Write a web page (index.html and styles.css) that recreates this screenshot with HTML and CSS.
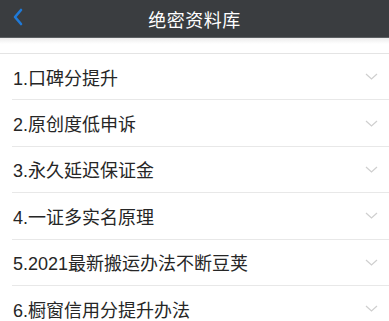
FILE: index.html
```html
<!DOCTYPE html>
<html lang="zh-CN">

<head>
    <meta charset="UTF-8">
    <meta name="viewport" content="width=device-width, initial-scale=1.0">
    <title>绝密资料库</title>
    <link rel="stylesheet" href="styles.css">
</head>

<body>
    <div class="top-bar">
        <a class="back-button" href="#">
            <svg width="14" height="20" viewBox="0 0 14 20">
                <path d="M10 3 L4 10 L10 17" fill="none" stroke="#1f7ad8" stroke-width="2.6" stroke-linecap="round" stroke-linejoin="round" />
            </svg>
        </a>
        <h1 class="top-title">绝密资料库</h1>
    </div>

    <div class="top-gap"></div>

    <!-- Topic list -->
    <ul class="topic-list">
        <li class="topic-item"><span>1.口碑分提升</span><svg class="arrow" viewBox="0 0 13 7"><path d="M1 1 L6.5 6 L12 1" /></svg></li>
        <li class="topic-item"><span>2.原创度低申诉</span><svg class="arrow" viewBox="0 0 13 7"><path d="M1 1 L6.5 6 L12 1" /></svg></li>
        <li class="topic-item"><span>3.永久延迟保证金</span><svg class="arrow" viewBox="0 0 13 7"><path d="M1 1 L6.5 6 L12 1" /></svg></li>
        <li class="topic-item"><span>4.一证多实名原理</span><svg class="arrow" viewBox="0 0 13 7"><path d="M1 1 L6.5 6 L12 1" /></svg></li>
        <li class="topic-item"><span>5.2021最新搬运办法不断豆荚</span><svg class="arrow" viewBox="0 0 13 7"><path d="M1 1 L6.5 6 L12 1" /></svg></li>
        <li class="topic-item"><span>6.橱窗信用分提升办法</span><svg class="arrow" viewBox="0 0 13 7"><path d="M1 1 L6.5 6 L12 1" /></svg></li>
    </ul>
</body>

</html>
```

FILE: styles.css
```css
body {
    margin: 0;
    padding: 0;
    background-color: #fff;
    font-family: "Liberation Sans", "Noto Sans CJK SC", sans-serif;
    color: #262626;
    overflow: hidden;
}

.top-bar {
    height: 38px;
    background-color: #3a3d40;
    display: flex;
    align-items: center;
    justify-content: center;
    position: relative;
    border-bottom: 1px solid #5c6063;
    box-sizing: border-box;
}

.back-button {
    position: absolute;
    left: 11px;
    top: 7px;
    display: block;
    height: 20px;
}

.top-title {
    margin: 0;
    color: #fff;
    font-size: 18px;
    font-weight: normal;
    letter-spacing: 0.5px;
}

.top-gap {
    height: 15px;
    background: linear-gradient(#ececec, #fff 40%);
    border-bottom: 1px solid #e4e4e4;
}

.topic-list {
    list-style: none;
    margin: 0;
    padding: 0 0 0 12px;
}

.topic-item {
    height: 45.4px;
    display: flex;
    align-items: center;
    justify-content: space-between;
    border-bottom: 1px solid #e8e8e8;
    font-size: 18px;
    padding-left: 1px;
}

.arrow {
    width: 13px;
    height: 7px;
    margin: 0 11px 0 0;
    fill: none;
    stroke: #cfcfcf;
    stroke-width: 1.2;
}
```
